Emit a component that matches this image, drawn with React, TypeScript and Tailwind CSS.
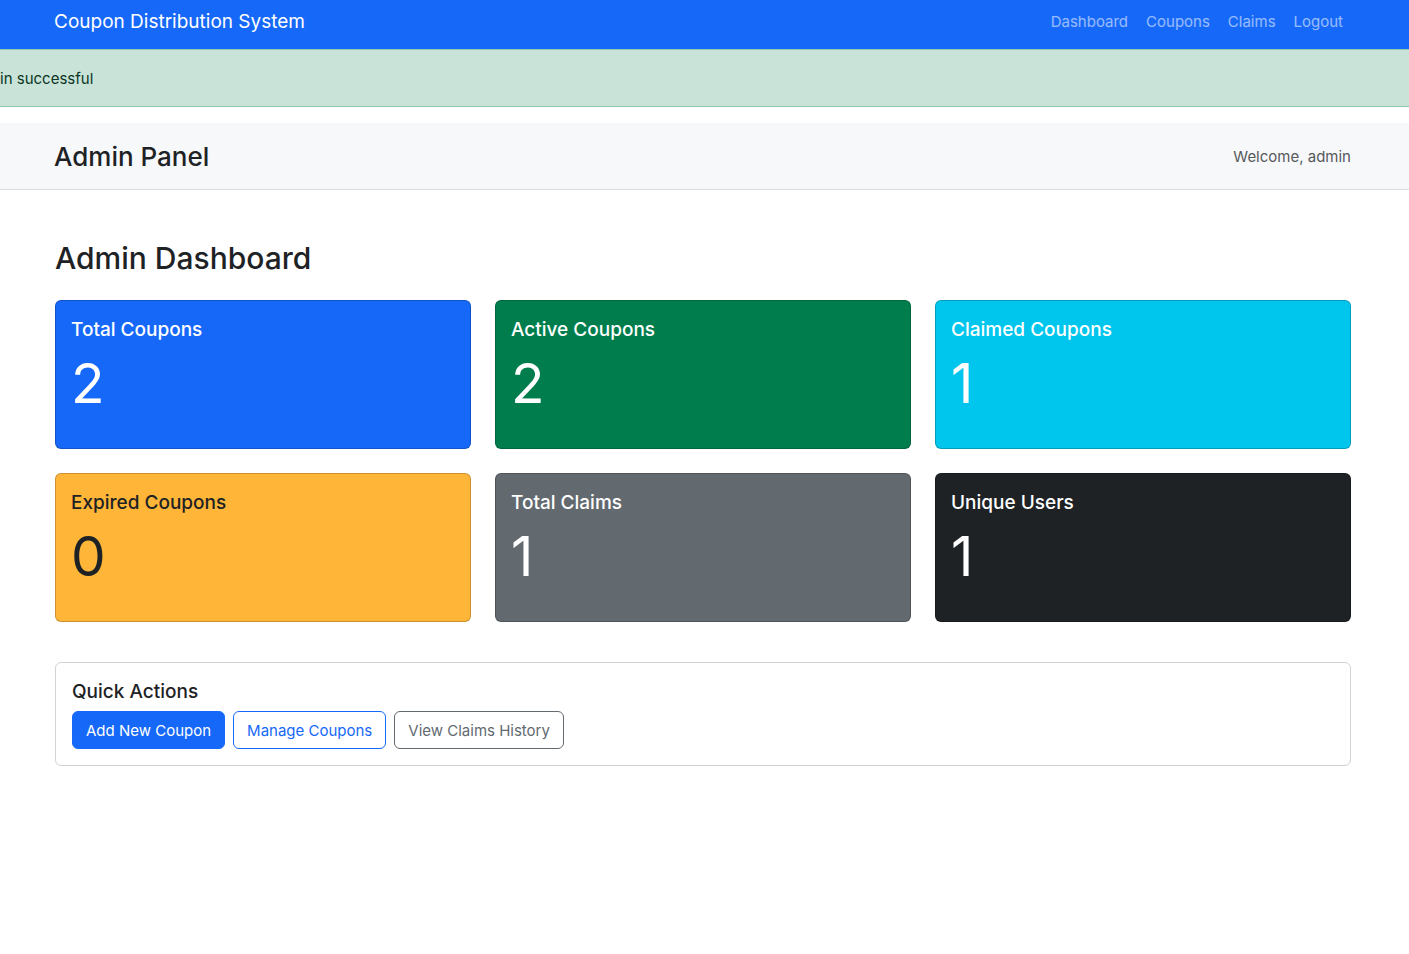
import React from 'react';

type Stat = { title: string; value: number; tone: string };

const navLinks = ['Dashboard', 'Coupons', 'Claims', 'Logout'];

const stats: Stat[] = [
  { title: 'Total Coupons', value: 2, tone: 'bg-[#1668f8] text-white' },
  { title: 'Active Coupons', value: 2, tone: 'bg-[#007d4d] text-white' },
  { title: 'Claimed Coupons', value: 1, tone: 'bg-[#00c5ec] text-white' },
  { title: 'Expired Coupons', value: 0, tone: 'bg-[#ffb638] text-[#1e2225]' },
  { title: 'Total Claims', value: 1, tone: 'bg-[#62696f] text-white' },
  { title: 'Unique Users', value: 1, tone: 'bg-[#1e2225] text-white' },
];

function StatCard({ title, value, tone }: Stat) {
  return (
    <article className={`rounded-md border border-black/20 px-[15px] pt-[17px] pb-[15px] ${tone}`}>
      <h3 className="mb-2 text-[19px] leading-6 font-medium">{title}</h3>
      <p className="mb-4 text-[55px] leading-[67px] font-normal">{value}</p>
    </article>
  );
}

function QuickActions() {
  const base = 'rounded-md border px-[13px] pt-[7px] pb-[5px] text-[15px] leading-6';
  return (
    <section className="mt-10 rounded-md border border-[#d2d3d5] px-4 pt-[17px] pb-4">
      <h3 className="mb-[7px] text-[19px] leading-6 font-medium">Quick Actions</h3>
      <div className="flex flex-wrap gap-2">
        <a href="#add" className={`${base} border-[#1668f8] bg-[#1668f8] text-white`}>
          Add New Coupon
        </a>
        <a href="#manage" className={`${base} border-[#1668f8] text-[#1668f8]`}>
          Manage Coupons
        </a>
        <a href="#history" className={`${base} border-[#62696f] text-[#62696f]`}>
          View Claims History
        </a>
      </div>
    </section>
  );
}

export default function App() {
  return (
    <div className="min-h-screen bg-white font-['Inter','Liberation_Sans',sans-serif] text-[15px] leading-6 text-[#1e2225]">
      <nav className="flex items-center justify-between bg-[#1668f8] pt-[7px] pr-[58px] pb-3 pl-[54px]">
        <a href="#home" className="text-[19px] leading-[30px] text-white">
          Coupon Distribution System
        </a>
        <ul className="flex gap-[18px] pr-2">
          {navLinks.map((label) => (
            <li key={label}>
              <a href={`#${label.toLowerCase()}`} className="text-white/55">
                {label}
              </a>
            </li>
          ))}
        </ul>
      </nav>

      <div role="alert" className="mb-4 border-y border-[#93c8b0] bg-[#c9e3d8] pt-[17px] pb-[15px] text-[#0a3622]">
        in successful
      </div>

      <header className="flex items-center justify-between border-b border-[#dadde1] bg-[#f7f8fa] pt-[17px] pr-[58px] pb-[15px] pl-[54px]">
        <h1 className="text-[26px] leading-[34px] font-medium">Admin Panel</h1>
        <span className="text-[#56585a]">Welcome, admin</span>
      </header>

      <main className="pt-[49px] pr-[58px] pl-[55px]">
        <h2 className="mb-[23px] text-[30px] leading-[38px] font-medium">Admin Dashboard</h2>
        <div className="grid grid-cols-3 gap-6">
          {stats.map((stat) => (
            <StatCard key={stat.title} {...stat} />
          ))}
        </div>
        <QuickActions />
      </main>
    </div>
  );
}
